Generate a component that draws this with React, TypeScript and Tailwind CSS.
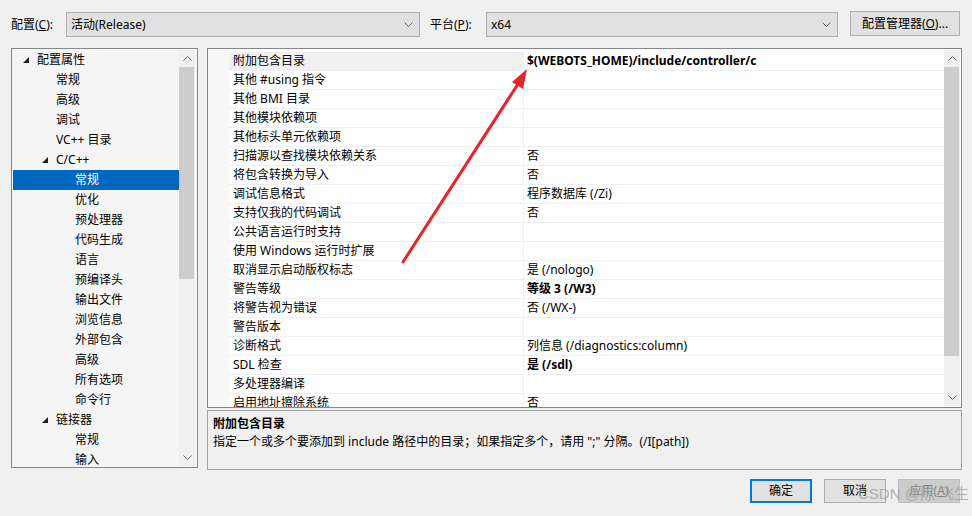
import { ReactNode } from 'react';

const font = { fontFamily: '"Noto Sans", "Noto Sans CJK SC", sans-serif' };

type TreeItem = { label: string; level: number; expanded?: boolean; selected?: boolean };

const treeItems: TreeItem[] = [
  { label: '配置属性', level: 0, expanded: true },
  { label: '常规', level: 1 },
  { label: '高级', level: 1 },
  { label: '调试', level: 1 },
  { label: 'VC++ 目录', level: 1 },
  { label: 'C/C++', level: 1, expanded: true },
  { label: '常规', level: 2, selected: true },
  { label: '优化', level: 2 },
  { label: '预处理器', level: 2 },
  { label: '代码生成', level: 2 },
  { label: '语言', level: 2 },
  { label: '预编译头', level: 2 },
  { label: '输出文件', level: 2 },
  { label: '浏览信息', level: 2 },
  { label: '外部包含', level: 2 },
  { label: '高级', level: 2 },
  { label: '所有选项', level: 2 },
  { label: '命令行', level: 2 },
  { label: '链接器', level: 1, expanded: true },
  { label: '常规', level: 2 },
  { label: '输入', level: 2 },
];

// property grid rows: [name, value, bold]
const props: [string, string, boolean?][] = [
  ['附加包含目录', '$(WEBOTS_HOME)/include/controller/c', true],
  ['其他 #using 指令', ''],
  ['其他 BMI 目录', ''],
  ['其他模块依赖项', ''],
  ['其他标头单元依赖项', ''],
  ['扫描源以查找模块依赖关系', '否'],
  ['将包含转换为导入', '否'],
  ['调试信息格式', '程序数据库 (/Zi)'],
  ['支持仅我的代码调试', '否'],
  ['公共语言运行时支持', ''],
  ['使用 Windows 运行时扩展', ''],
  ['取消显示启动版权标志', '是 (/nologo)'],
  ['警告等级', '等级 3 (/W3)', true],
  ['将警告视为错误', '否 (/WX-)'],
  ['警告版本', ''],
  ['诊断格式', '列信息 (/diagnostics:column)'],
  ['SDL 检查', '是 (/sdl)', true],
  ['多处理器编译', ''],
  ['启用地址擦除系统', '否'],
];

const Chevron = ({ up }: { up?: boolean }) => (
  <svg width="9" height="5" viewBox="0 0 9 5" className={up ? 'rotate-180' : ''}>
    <path d="M0.5 0.5 L4.5 4.5 L8.5 0.5" fill="none" stroke="#606060" strokeWidth="1" />
  </svg>
);

const Triangle = () => (
  <svg width="6" height="6" viewBox="0 0 6 6">
    <polygon points="6,0 6,6 0,6" fill="#1e1e1e" />
  </svg>
);

const Combo = ({ children, width }: { children: ReactNode; width: string }) => (
  <div className={`${width} flex h-[25px] items-center justify-between border border-[#adadad] bg-[#e1e1e1] pl-[4px] pr-[6px] text-[12px] text-black`}>
    <span>{children}</span>
    <Chevron />
  </div>
);

const Scrollbar = ({ thumbHeight }: { thumbHeight: string }) => (
  <div className="flex w-[16px] flex-col items-center bg-[#f0f0f0]">
    <div className="flex h-[17px] items-center justify-center">
      <Chevron up />
    </div>
    <div className="relative w-full flex-1">
      <div className={`absolute left-0 right-[1px] top-0 ${thumbHeight} bg-[#cdcdcd]`} />
    </div>
    <div className="flex h-[17px] items-center justify-center">
      <Chevron />
    </div>
  </div>
);

const Button = ({ children, primary, disabled }: { children: ReactNode; primary?: boolean; disabled?: boolean }) => (
  <div
    className={`flex h-[24px] w-[62px] items-center justify-center text-[12px] ${
      primary
        ? 'border-2 border-[#0078d7] bg-[#e1e1e1] text-black'
        : disabled
        ? 'border border-[#bfbfbf] bg-[#cccccc] text-[#838383]'
        : 'border border-[#adadad] bg-[#e1e1e1] text-black'
    }`}
  >
    {children}
  </div>
);

const App = () => {
  return (
    <div className="relative h-[516px] w-[972px] overflow-hidden bg-[#f0f0f0] text-[12px] leading-[16px] text-black" style={font}>
      {/* top bar */}
      <div className="flex h-[48px] items-start pt-[12px]">
        <div className="flex h-[25px] w-[66px] items-center pl-[11px]">
          配置(<u>C</u>):
        </div>
        <Combo width="w-[354px]">活动(Release)</Combo>
        <div className="flex h-[25px] w-[66px] items-center pl-[10px]">
          平台(<u>P</u>):
        </div>
        <Combo width="w-[352px]">x64</Combo>
        <div className="ml-[12px] -mt-[1px] flex h-[25px] w-[110px] items-center justify-center border border-[#adadad] bg-[#e1e1e1]">
          配置管理器(<u>O</u>)...
        </div>
      </div>

      <div className="flex h-[422px] pl-[11px]">
        {/* tree */}
        <div className="flex h-[420px] w-[187px] border border-[#828790] bg-[#f5f5f5]">
          <div className="flex-1 overflow-hidden pl-[1px] pt-[1px]">
            {treeItems.map((item, i) => (
              <div
                key={i}
                className={`flex h-[20px] items-center ${item.selected ? 'bg-[#0067c0] text-white' : ''}`}
              >
                <div className={`flex justify-end ${item.level === 0 ? 'w-[24px]' : item.level === 1 ? 'w-[43px]' : 'w-[62px]'}`}>
                  {item.expanded && (
                    <span className="mr-[8px] flex">
                      <Triangle />
                    </span>
                  )}
                </div>
                <span>{item.label}</span>
              </div>
            ))}
          </div>
          <div className="mr-[2px] mt-[1px] mb-[1px] flex">
            <Scrollbar thumbHeight="h-[212px]" />
          </div>
        </div>

        {/* right column */}
        <div className="ml-[9px] flex w-[755px] flex-col">
          <div className="flex h-[360px] border border-[#828790] bg-white">
            <div className="w-[21px] bg-[#f7f7f7]" />
            <div className="flex-1 overflow-hidden pt-[3px]">
              {props.map(([name, value, bold], i) => (
                <div key={i} className="flex h-[19px] border-b border-[#eef0f6]">
                  <div className={`flex w-[294px] items-center pl-[4px] ${i === 0 ? 'bg-[#f0f0f0]' : ''}`}>{name}</div>
                  <div className={`flex flex-1 items-center border-l border-[#eef0f6] pl-[3px] ${bold ? 'font-bold' : ''}`}>{value}</div>
                </div>
              ))}
            </div>
            <div className="my-[1px] mr-[1px] flex">
              <Scrollbar thumbHeight="h-[289px]" />
            </div>
          </div>
          <div className="mt-[2px] h-[60px] border border-[#a0a0a0] bg-[#f0f0f0] px-[5px] pt-[4px]">
            <div className="font-bold leading-[18px]">附加包含目录</div>
            <div className="leading-[18px]">指定一个或多个要添加到 include 路径中的目录；如果指定多个，请用 ";" 分隔。(/I[path])</div>
          </div>
        </div>
      </div>

      {/* buttons */}
      <div className="mt-[9px] flex justify-end gap-[12px] pr-[12px]">
        <Button primary>确定</Button>
        <Button>取消</Button>
        <Button disabled>
          应用(<u>A</u>)
        </Button>
      </div>

      {/* watermark */}
      <div className="absolute left-[858px] top-[486px] text-[15px] text-[#a0a0a0]/80" style={{ fontFamily: '"Liberation Sans", "Noto Sans CJK SC", sans-serif' }}>
        CSDN @陈 飞生
      </div>

      {/* red annotation arrow */}
      <svg className="pointer-events-none absolute left-0 top-0" width="972" height="516">
        <line x1="403" y1="262" x2="518" y2="84" stroke="#e8242b" strokeWidth="3" strokeLinecap="round" />
        <polygon points="527,69 512,82 523,89" fill="#e8242b" />
      </svg>
    </div>
  );
};

export default App;
